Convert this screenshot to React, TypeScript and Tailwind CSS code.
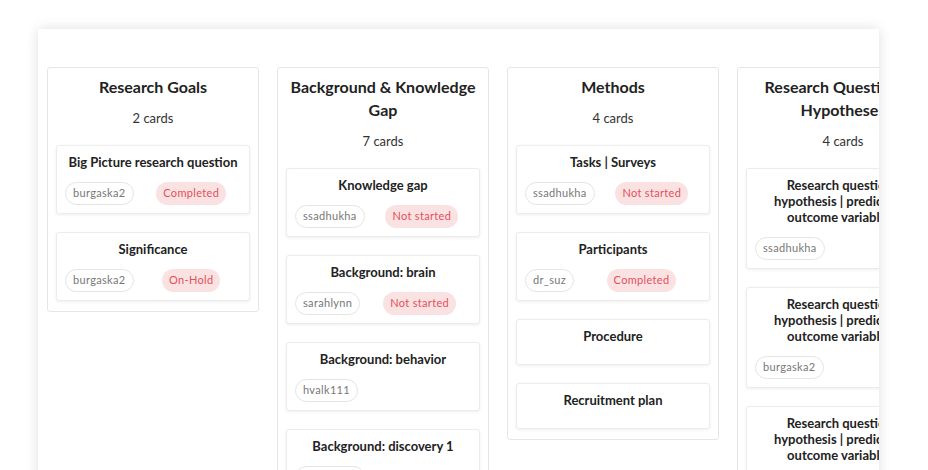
import React from "react"

type Card = {
  title: string
  user?: string
  status?: string
}

type Column = {
  title: string
  cards: Card[]
  count: number
}

const columns: Column[] = [
  {
    title: "Research Goals",
    count: 2,
    cards: [
      { title: "Big Picture research question", user: "burgaska2", status: "Completed" },
      { title: "Significance", user: "burgaska2", status: "On-Hold" },
    ],
  },
  {
    title: "Background & Knowledge Gap",
    count: 7,
    cards: [
      { title: "Knowledge gap", user: "ssadhukha", status: "Not started" },
      { title: "Background: brain", user: "sarahlynn", status: "Not started" },
      { title: "Background: behavior", user: "hvalk111" },
      { title: "Background: discovery 1", user: "ssadhukha" },
    ],
  },
  {
    title: "Methods",
    count: 4,
    cards: [
      { title: "Tasks | Surveys", user: "ssadhukha", status: "Not started" },
      { title: "Participants", user: "dr_suz", status: "Completed" },
      { title: "Procedure" },
      { title: "Recruitment plan" },
    ],
  },
  {
    title: "Research Questions & Hypotheses",
    count: 4,
    cards: [
      { title: "Research question | hypothesis | prediction | outcome variable(s)", user: "ssadhukha" },
      { title: "Research question | hypothesis | prediction | outcome variable(s)", user: "burgaska2" },
      { title: "Research question | hypothesis | prediction | outcome variable(s)", user: "ssadhukha" },
    ],
  },
]

function BoardCard({ card }: { card: Card }) {
  const hasTags = card.user || card.status
  return (
    <div className="bg-white border border-[#ececec] rounded-[3px] shadow-[0_1px_3px_rgba(0,0,0,0.07)] px-[8px] pt-2 pb-2">
      <div className="text-center text-[13px] font-bold leading-[16px] text-[#222] pb-3">
        {card.title}
      </div>
      {hasTags && (
        <div className="flex items-center gap-2">
          {card.user && (
            <span className="h-[23px] flex items-center px-[7px] rounded-full border border-[#e4e4e4] text-[11px] tracking-[0.03em] text-[#777]">
              {card.user}
            </span>
          )}
          <div className="flex-1 flex justify-center">
            {card.status && (
              <span className="h-[23px] flex items-center px-[7px] rounded-full bg-[#fbe2e2] text-[11px] tracking-[0.03em] text-[#e2505a]">
                {card.status}
              </span>
            )}
          </div>
        </div>
      )}
    </div>
  )
}

function BoardColumn({ column }: { column: Column }) {
  return (
    <div className="w-[212px] shrink-0 border border-[#e6e6e6] rounded-[3px] px-[8px] pt-[7px] pb-[10px]">
      <div className="text-center text-[16px] font-bold leading-[23px] text-[#222]">
        {column.title}
      </div>
      <div className="text-center text-[13px] leading-[20px] text-[#333] mt-[10px]">
        {column.count} cards
      </div>
      <div className="flex flex-col gap-[18px] mt-[17px]">
        {column.cards.map((card, i) => (
          <BoardCard key={i} card={card} />
        ))}
      </div>
    </div>
  )
}

export default function App() {
  return (
    <div
      className="h-[470px] overflow-hidden bg-white pt-[29px] pl-[38px]"
      style={{ fontFamily: "Lato, 'Noto Sans', sans-serif" }}
    >
      <div className="w-[841px] h-[500px] bg-white shadow-[0_0_12px_rgba(0,0,0,0.13)] overflow-hidden pt-[38px] pl-[9px]">
        <div className="flex items-start gap-[18px]">
          {columns.map((col, i) => (
            <BoardColumn key={i} column={col} />
          ))}
        </div>
      </div>
    </div>
  )
}
